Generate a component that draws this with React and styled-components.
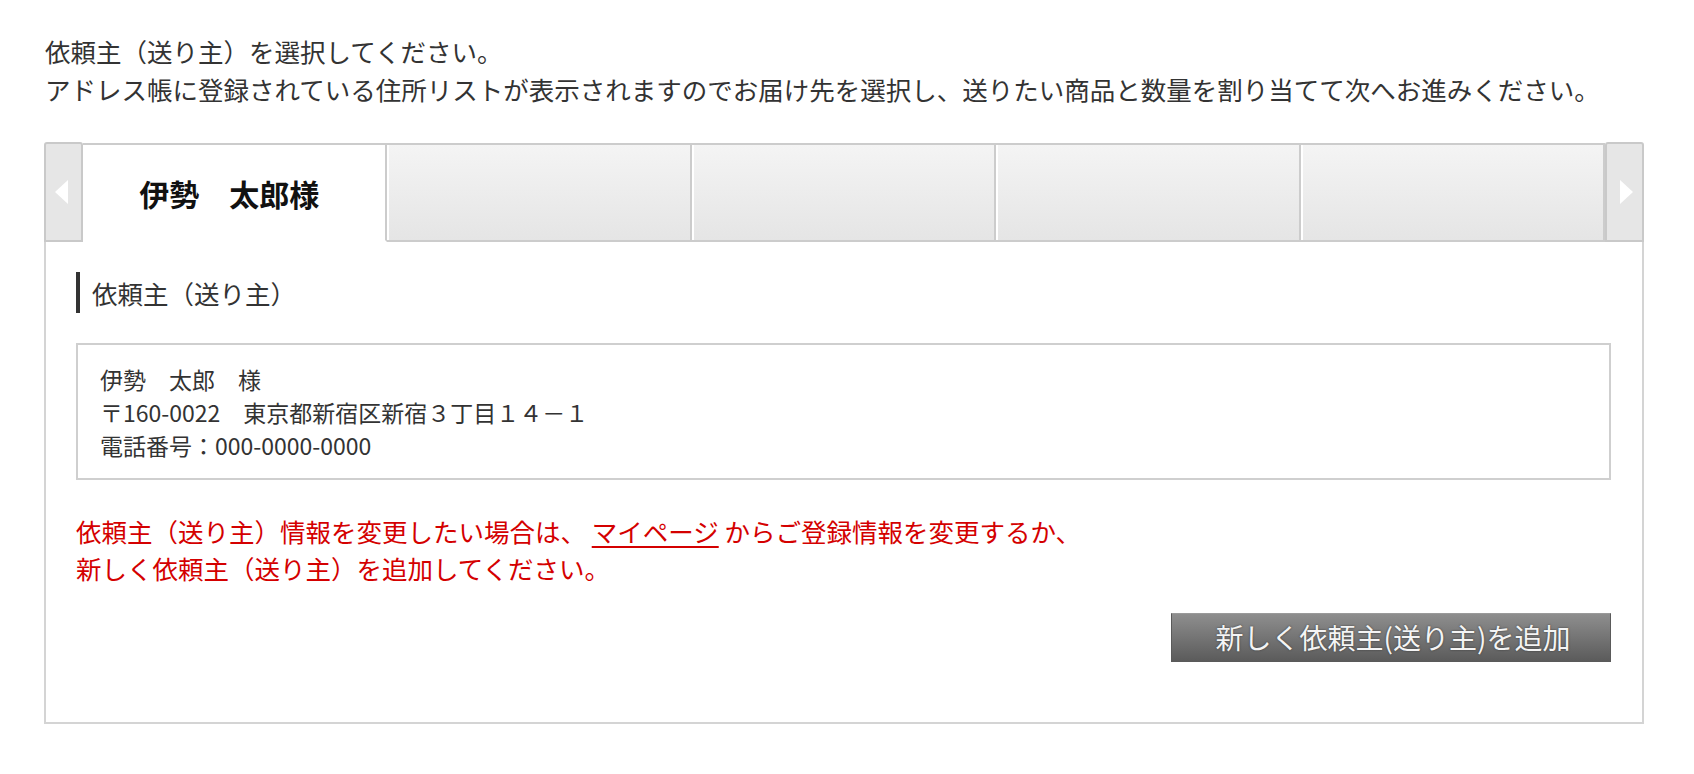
import React from 'react';
import styled, { createGlobalStyle } from 'styled-components';

const GlobalStyle = createGlobalStyle`
  body {
    margin: 0;
    background: #fff;
    font-family: "Noto Sans CJK JP", "Noto Sans", sans-serif;
    color: #333;
  }
`;

const tabs = ['伊勢　太郎様', '', '', '', ''];

const App = () => {
  return (
    <>
      <GlobalStyle />
      <Page>
        <Intro>
          依頼主（送り主）を選択してください。
          <br />
          アドレス帳に登録されている住所リストが表示されますのでお届け先を選択し、送りたい商品と数量を割り当てて次へお進みください。
        </Intro>
        <Panel>
          <TabBar>
            <ArrowTab aria-label='前へ'>
              <Triangle $dir='left' />
            </ArrowTab>
            {tabs.map((name, i) => (
              <Tab key={i} $active={i === 0}>
                {name}
              </Tab>
            ))}
            <ArrowTab aria-label='次へ'>
              <Triangle $dir='right' />
            </ArrowTab>
          </TabBar>
          <Body>
            <Heading>依頼主（送り主）</Heading>
            <AddressBox>
              <p>伊勢　太郎　様</p>
              <p>〒160-0022　東京都新宿区新宿３丁目１４－１</p>
              <p>電話番号：000-0000-0000</p>
            </AddressBox>
            <Notice>
              依頼主（送り主）情報を変更したい場合は、 <a href='#'>マイページ</a> からご登録情報を変更するか、
              <br />
              新しく依頼主（送り主）を追加してください。
            </Notice>
            <Actions>
              <AddButton type='button'>新しく依頼主(送り主)を追加</AddButton>
            </Actions>
          </Body>
        </Panel>
      </Page>
    </>
  );
};

const Page = styled.div`
  width: 1600px;
  padding: 32px 0 0 44px;
`;

const Intro = styled.p`
  margin: 0 0 34px 1px;
  font-size: 25.5px;
  line-height: 38px;
  color: #333;
  white-space: nowrap;
`;

const Panel = styled.div`
  display: flex;
  flex-direction: column;
`;

const TabBar = styled.div`
  display: flex;
  height: 100px;
`;

const ArrowTab = styled.div`
  width: 39px;
  box-sizing: border-box;
  display: flex;
  align-items: center;
  justify-content: center;
  background: #e6e6e6;
  border: 2px solid #c9c9c9;
  border-radius: 3px 3px 0 0;
`;

const Triangle = styled.span`
  width: 0;
  height: 0;
  border-top: 12px solid transparent;
  border-bottom: 12px solid transparent;
  ${({ $dir }) =>
    $dir === 'left'
      ? 'border-right: 13px solid #fff; margin-left: -4px;'
      : 'border-left: 13px solid #fff; margin-left: 4px;'}
`;

const Tab = styled.div`
  flex: 1;
  box-sizing: border-box;
  margin-top: 1px;
  display: flex;
  align-items: center;
  justify-content: center;
  font-size: 30px;
  font-weight: bold;
  color: #111;
  border-top: 2px solid #cccccc;
  border-right: 2px solid #cccccc;
  background: ${({ $active }) =>
    $active ? '#fff' : 'linear-gradient(#f4f4f4, #e5e5e5)'};
  border-bottom: 2px solid ${({ $active }) => ($active ? '#fff' : '#cccccc')};
  box-shadow: ${({ $active }) => ($active ? 'none' : 'inset 2px 0 0 #fff')};
  padding-right: 10px;
`;

const Body = styled.div`
  border: 2px solid #d4d4d4;
  border-top: none;
  padding: 30px 31px 60px 30px;
  display: flex;
  flex-direction: column;
`;

const Heading = styled.h2`
  margin: 0 0 30px 0;
  border-left: 4px solid #333;
  padding-left: 12px;
  font-size: 25.5px;
  font-weight: normal;
  line-height: 41px;
  color: #333;
`;

const AddressBox = styled.div`
  border: 2px solid #cfcfcf;
  padding: 18px 22px 16px;
  font-size: 23px;
  line-height: 33px;
  color: #333;
  p {
    margin: 0;
  }
`;

const Notice = styled.p`
  margin: 32px 0 0 0;
  font-size: 25.5px;
  line-height: 37px;
  color: #d40000;
  a {
    color: #d40000;
    text-decoration: underline;
    text-underline-offset: 4px;
  }
`;

const Actions = styled.div`
  display: flex;
  justify-content: flex-end;
  margin-top: 27px;
`;

const AddButton = styled.button`
  width: 440px;
  height: 49px;
  border: 1px solid #5a5a5a;
  border-top-color: #9a9a9a;
  background: linear-gradient(#8e8e8e, #5b5b5b);
  color: #f4f4f4;
  font-family: "Noto Sans CJK JP", sans-serif;
  font-size: 28px;
  line-height: 45px;
  text-shadow: 0 0 2px #333;
  cursor: pointer;
  padding: 0 0 0 4px;
`;

export default App;
